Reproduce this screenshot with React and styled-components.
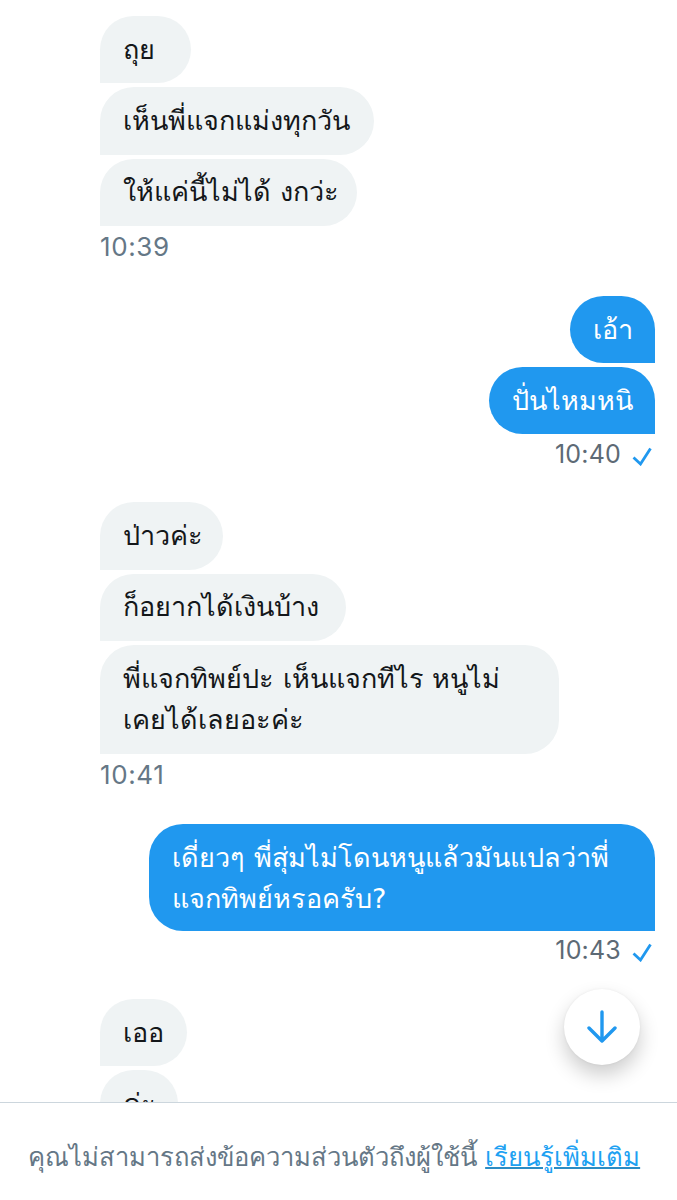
import React from 'react'
import styled, { createGlobalStyle } from 'styled-components'

const GlobalStyle = createGlobalStyle`
  html, body {
    margin: 0;
    padding: 0;
    background: #ffffff;
  }
`

const Page = styled.div`
  position: relative;
  display: flex;
  flex-direction: column;
  width: 677px;
  height: 1200px;
  overflow: hidden;
  background: #ffffff;
  font-family: "DejaVu Sans", "Noto Sans", sans-serif;
`
const Conversation = styled.div`
  flex: 1;
  min-height: 0;
  overflow: hidden;
  padding: 16px 22px 0 100px;
  display: flex;
  flex-direction: column;
`
const Group = styled.div`
  display: flex;
  flex-direction: column;
  gap: 4px;
  align-items: ${(p) => (p.$mine ? 'flex-end' : 'flex-start')};
  margin-bottom: ${(p) => (p.$mine ? 30.5 : 31)}px;
`
const Bubble = styled.div`
  box-sizing: border-box;
  width: ${(p) => (p.$width ? `${p.$width}px` : 'auto')};
  padding: 12.75px 22px ${(p) => (p.$tight ? 10.75 : 12.75)}px 23px;
  font-size: 27px;
  line-height: 41.75px;
  white-space: pre;
  color: ${(p) => (p.$mine ? '#ffffff' : '#14171a')};
  background: ${(p) => (p.$mine ? '#2098ef' : '#eff3f4')};
  border-radius: ${(p) => (p.$mine ? '34px 34px 0 34px' : '34px 34px 34px 0')};
`
const Meta = styled.div`
  display: flex;
  align-items: center;
  gap: 11px;
  height: 36px;
  margin-top: ${(p) => (p.$mine ? -2.5 : -1)}px;
  font-family: "Inter", "Liberation Sans", sans-serif;
  font-size: ${(p) => (p.$mine ? 25 : 26)}px;
  letter-spacing: ${(p) => (p.$mine ? 0.2 : 0.6)}px;
  color: ${(p) => (p.$mine ? '#5d6a75' : '#657786')};
`
const Check = styled.svg`
  width: 20px;
  height: 19px;
  margin: 5px 3px 0 0;
  fill: none;
  stroke: #2098ef;
  stroke-width: 2.8;
`
const ScrollButton = styled.button`
  position: absolute;
  left: 564px;
  top: 989px;
  width: 76px;
  height: 76px;
  padding: 0;
  border: none;
  border-radius: 50%;
  background: #ffffff;
  box-shadow: 0 10px 20px rgba(0, 0, 0, 0.2), 0 0 3px rgba(0, 0, 0, 0.06);
  display: flex;
  align-items: center;
  justify-content: center;
`
const Arrow = styled.svg`
  width: 34px;
  height: 36px;
  fill: none;
  stroke: #2098ef;
  stroke-width: 3.4;
  stroke-linecap: round;
  stroke-linejoin: round;
`
const Footer = styled.div`
  flex: none;
  box-sizing: border-box;
  height: 98px;
  border-top: 1px solid #ccd6dd;
  padding: 35px 0 0 28px;
  font-size: 25.6px;
  line-height: 38px;
  color: #657786;
  background: #ffffff;
  white-space: nowrap;
`
const LearnMore = styled.a`
  color: #1da1f2;
  text-decoration: underline;
  text-decoration-color: #2b8cc4;
  text-decoration-thickness: 2px;
`

const messages = [
  {
    texts: [
      { text: 'ถุย', width: 91 },
      { text: 'เห็นพี่แจกแม่งทุกวัน', width: 274 },
      { text: 'ให้แค่นี้ไม่ได้ งกว่ะ', width: 257 },
    ],
    time: '10:39',
  },
  { mine: true, texts: [{ text: 'เอ้า' }, { text: 'ปั่นไหมหนิ' }], time: '10:40' },
  {
    texts: [
      { text: 'ป่าวค่ะ', width: 123 },
      { text: 'ก็อยากได้เงินบ้าง', width: 246 },
      { text: 'พี่แจกทิพย์ปะ เห็นแจกทีไร หนูไม่\nเคยได้เลยอะค่ะ', width: 459 },
    ],
    time: '10:41',
  },
  {
    mine: true,
    texts: [{ text: 'เดี่ยวๆ พี่สุ่มไม่โดนหนูแล้วมันแปลว่าพี่\nแจกทิพย์หรอครับ?', width: 506, tight: true }],
    time: '10:43',
  },
  { texts: [{ text: 'เออ', width: 87 }, { text: 'ค่ะ' }] },
]

function CheckIcon() {
  return (
    <Check viewBox="0 0 20 19">
      <path d="M1.5 10.5l7 6.5L18.5 1.5" />
    </Check>
  )
}

export default function App() {
  return (
    <Page>
      <GlobalStyle />
      <Conversation>
        {messages.map((m, i) => (
          <Group key={i} $mine={m.mine}>
            {m.texts.map((t) => (
              <Bubble key={t.text} $mine={m.mine} $width={t.width} $tight={t.tight}>{t.text}</Bubble>
            ))}
            {m.time && (
              <Meta $mine={m.mine}>
                {m.time}
                {m.mine && <CheckIcon />}
              </Meta>
            )}
          </Group>
        ))}
      </Conversation>
      <ScrollButton aria-label="down">
        <Arrow viewBox="0 0 34 36">
          <path d="M17 3v29M4 19l13 13 13-13" />
        </Arrow>
      </ScrollButton>
      <Footer>
        คุณไม่สามารถส่งข้อความส่วนตัวถึงผู้ใช้นี้ <LearnMore>เรียนรู้เพิ่มเติม</LearnMore>
      </Footer>
    </Page>
  )
}
